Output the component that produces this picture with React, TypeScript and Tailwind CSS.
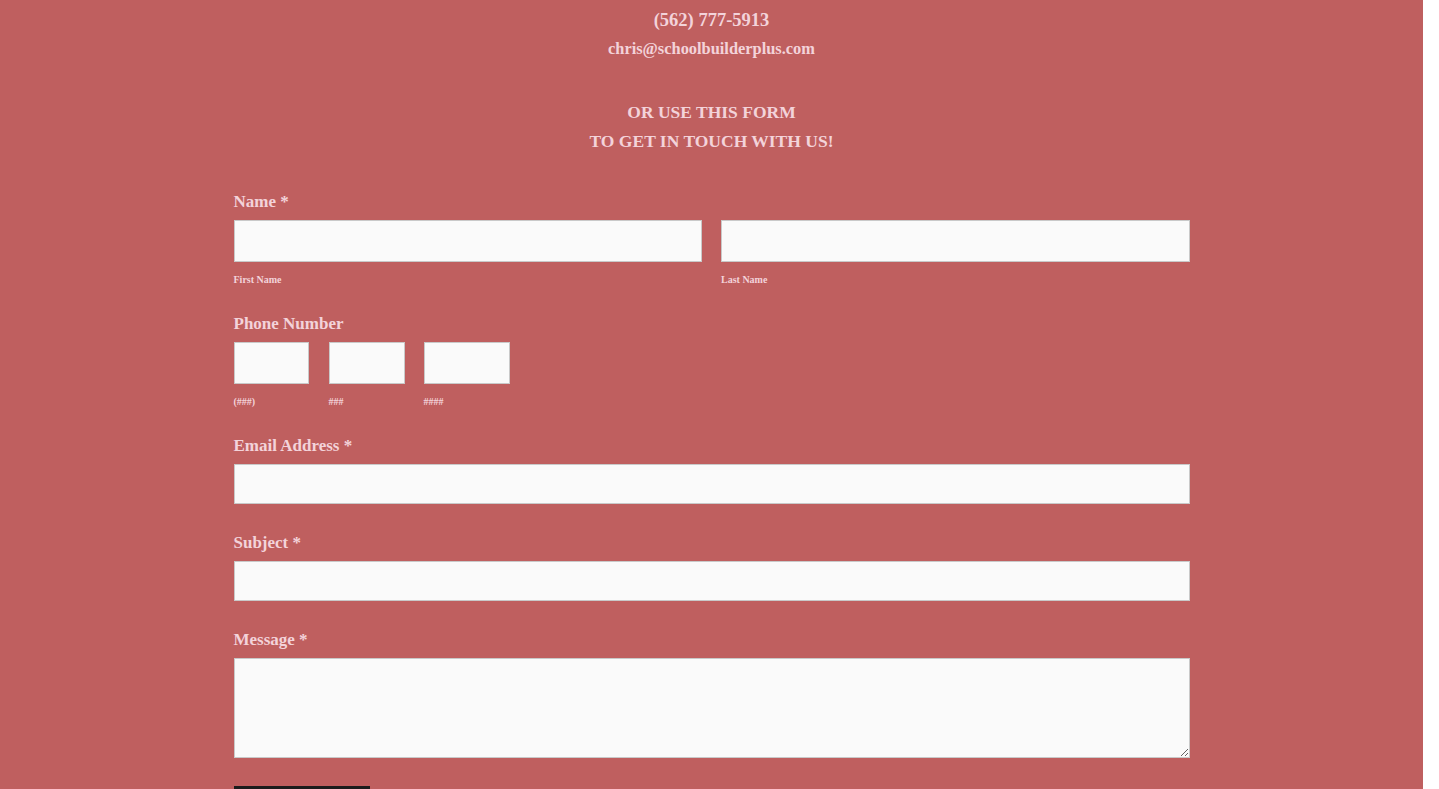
const serif = "font-['Liberation_Serif',serif]";

function FieldLabel({ children }: { children: string }) {
  return (
    <label className="block pt-[1px] text-[17px] font-semibold leading-6 text-[#f3d3da]">
      {children}
    </label>
  );
}

function SubLabel({ children }: { children: string }) {
  return (
    <p className="mt-[11px] text-[10px] font-bold leading-[14px] text-[#f3d3da]">
      {children}
    </p>
  );
}

const inputBox =
  "block border border-[#c9c9c9] bg-[#fafafa] outline-none";

export default function App() {
  return (
    <div className={`flex min-h-screen bg-white ${serif}`}>
      <main className="w-[1423px] shrink-0 bg-[#bf5f5f] pb-10">
        <div className="pt-[6px] text-center text-[#f3d3da]">
          <p className="text-[18.5px] font-semibold leading-7">(562) 777-5913</p>
          <p className="mt-[1px] text-[16.4px] font-semibold leading-7">
            chris@schoolbuilderplus.com
          </p>
          <h2 className="mt-[35px] text-[17.5px] font-semibold uppercase leading-[29px]">
            Or use this form
            <br />
            To get in touch with us!
          </h2>
        </div>

        <form className="mx-auto mt-[33px] w-[956px]">
          <FieldLabel>Name *</FieldLabel>
          <div className="mt-[6px] grid grid-cols-2 gap-[19px]">
            <div>
              <input className={`${inputBox} h-[42px] w-full`} />
              <SubLabel>First Name</SubLabel>
            </div>
            <div>
              <input className={`${inputBox} h-[42px] w-full`} />
              <SubLabel>Last Name</SubLabel>
            </div>
          </div>

          <div className="mt-[24px]">
            <FieldLabel>Phone Number</FieldLabel>
            <div className="mt-[6px] flex">
              <div>
                <input className={`${inputBox} h-[42px] w-[75px]`} />
                <SubLabel>(###)</SubLabel>
              </div>
              <div className="ml-[20px]">
                <input className={`${inputBox} h-[42px] w-[76px]`} />
                <SubLabel>###</SubLabel>
              </div>
              <div className="ml-[19px]">
                <input className={`${inputBox} h-[42px] w-[86px]`} />
                <SubLabel>####</SubLabel>
              </div>
            </div>
          </div>

          <div className="mt-[24px]">
            <FieldLabel>Email Address *</FieldLabel>
            <input className={`${inputBox} mt-[6px] h-[40px] w-full`} />
          </div>

          <div className="mt-[26px]">
            <FieldLabel>Subject *</FieldLabel>
            <input className={`${inputBox} mt-[6px] h-[40px] w-full`} />
          </div>

          <div className="mt-[26px]">
            <FieldLabel>Message *</FieldLabel>
            <textarea className={`${inputBox} mt-[6px] h-[100px] w-full`} />
          </div>

          <button
            type="button"
            className="mt-[28px] h-[46px] w-[136px] bg-[#1c1c1c] text-[15px] font-semibold uppercase tracking-wider text-white"
          >
            Submit
          </button>
        </form>
      </main>
    </div>
  );
}
